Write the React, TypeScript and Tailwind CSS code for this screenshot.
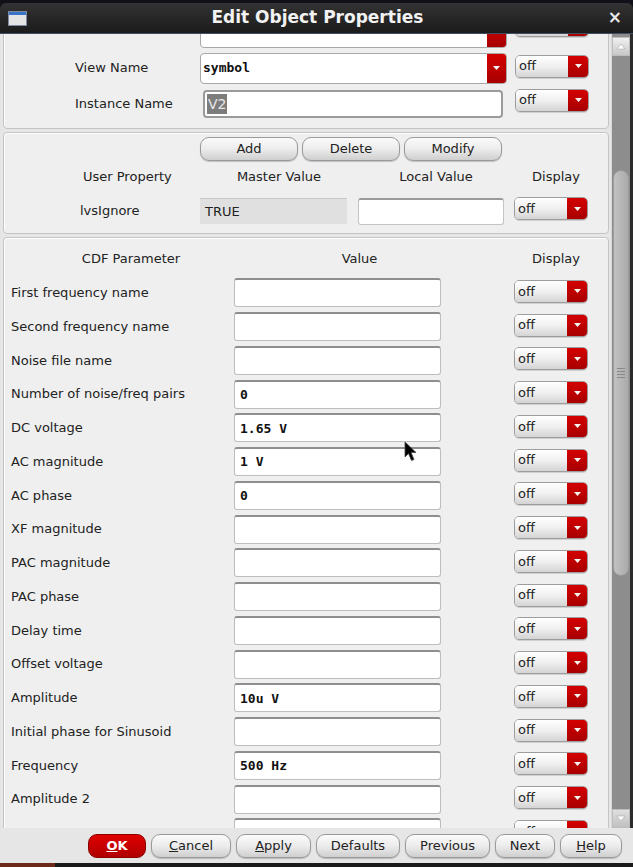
import React from "react";

/**
 * Edit Object Properties dialog (Virtuoso style).
 */

const SANS = { fontFamily: '"DejaVu Sans", Verdana, sans-serif' };
const MONO = { fontFamily: '"DejaVu Sans Mono", "Liberation Mono", monospace' };

interface CdfRow {
  label: string;
  value: string;
}

const CDF_ROWS: CdfRow[] = [
  { label: "First frequency name", value: "" },
  { label: "Second frequency name", value: "" },
  { label: "Noise file name", value: "" },
  { label: "Number of noise/freq pairs", value: "0" },
  { label: "DC voltage", value: "1.65 V" },
  { label: "AC magnitude", value: "1 V" },
  { label: "AC phase", value: "0" },
  { label: "XF magnitude", value: "" },
  { label: "PAC magnitude", value: "" },
  { label: "PAC phase", value: "" },
  { label: "Delay time", value: "" },
  { label: "Offset voltage", value: "" },
  { label: "Amplitude", value: "10u V" },
  { label: "Initial phase for Sinusoid", value: "" },
  { label: "Frequency", value: "500 Hz" },
  { label: "Amplitude 2", value: "" },
  { label: "", value: "" },
];

function DownTri() {
  return (
    <svg width="9" height="6" viewBox="0 0 9 6">
      <path d="M1 1 L8 1 L4.5 5 Z" fill="#f4f4f4" />
    </svg>
  );
}

function OffDrop({ label = "off" }: { label?: string }) {
  return (
    <div className="flex h-[23px] w-[74px] overflow-hidden rounded-[5px] border border-[#9d9d9d] shadow-[0_1px_0_#d0d0d0]">
      <div className="flex flex-1 items-center bg-gradient-to-b from-[#ffffff] via-[#f0f0f0] to-[#d4d4d4] pl-[3px] text-[13px] text-[#222]">
        {label}
      </div>
      <div className="flex w-[20px] items-center justify-center bg-gradient-to-b from-[#d40000] to-[#a80000]">
        <DownTri />
      </div>
    </div>
  );
}

function Field({ value, w = "w-[207px]", h = "h-[29px]" }: { value?: string; w?: string; h?: string }) {
  return (
    <div
      className={`${w} ${h} flex items-center rounded-[3px] border border-[#bdbdbd] border-t-2 border-t-[#8e8e8e] bg-white pl-[5px] text-[13px] font-bold text-[#111]`}
      style={MONO}
    >
      {value}
    </div>
  );
}

function GrayBtn({ children, w }: { children: React.ReactNode; w: string }) {
  return (
    <div
      className={`${w} flex h-[24px] items-center justify-center rounded-[9px] border border-[#9a9a9a] bg-gradient-to-b from-[#fbfbfb] via-[#ececec] to-[#cfcfcf] text-[13px] text-[#222] shadow-[0_1px_1px_rgba(0,0,0,0.2)]`}
    >
      {children}
    </div>
  );
}

function Cursor() {
  return (
    <svg className="absolute left-[404px] top-[407px]" width="14" height="22" viewBox="0 0 14 22">
      <path d="M1 1 L1 16 L4.5 12.5 L7.5 19.5 L10 18.5 L7 11.5 L12 11.5 Z" fill="#000" stroke="#444" strokeWidth="0.8" />
    </svg>
  );
}

export default function App() {
  return (
    <div className="relative flex h-[867px] w-[633px] flex-col overflow-hidden bg-[#101018]" style={SANS}>
      {/* Title bar */}
      <div className="mt-[3px] flex h-[31px] items-center rounded-t-[6px] border-b border-[#3c4f63] bg-gradient-to-b from-[#333] to-[#1b1b1b] px-[8px]">
        <div className="h-[15px] w-[19px] border border-[#7d8aa0] bg-[#e4e4e4]">
          <div className="h-[3px] bg-[#3a74c8]" />
        </div>
        <div className="flex-1 text-center text-[17px] font-bold text-[#f2f2f2]">Edit Object Properties</div>
        <div className="pr-[3px] text-[17px] font-bold text-[#e8e8e8]">×</div>
      </div>

      {/* Body */}
      <div className="flex h-[794px] bg-[#e6e6e6]">
        <div className="relative h-full w-[609px] overflow-hidden pl-[3px]">
          <div className="mt-[-21px] flex flex-col gap-[3px]">
            {/* Panel 1 */}
            <div className="rounded-[4px] border border-[#c4c4c4] bg-[#efefef] pb-[6px] shadow-[inset_1px_1px_0_#fff]">
              <div className="flex h-[36px] items-center">
                <div className="w-[196px]" />
                <div className="flex h-[31px] w-[307px] overflow-hidden rounded-[4px] border border-[#a8a8a8] bg-white">
                  <div className="flex-1" />
                  <div className="flex w-[19px] items-center justify-center bg-gradient-to-b from-[#d40000] to-[#a80000]">
                    <DownTri />
                  </div>
                </div>
                <div className="ml-[8px] mt-[-13px]">
                  <OffDrop label="" />
                </div>
              </div>
              <div className="flex h-[36px] items-center">
                <div className="w-[196px] pl-[71px] text-[13px] text-[#222]">View Name</div>
                <div className="flex h-[31px] w-[307px] overflow-hidden rounded-[4px] border border-[#a8a8a8] bg-white">
                  <div className="flex flex-1 items-center pl-[2px] text-[13px] font-bold text-[#111]" style={MONO}>
                    symbol
                  </div>
                  <div className="flex w-[19px] items-center justify-center bg-gradient-to-b from-[#d40000] to-[#a80000]">
                    <DownTri />
                  </div>
                </div>
                <div className="ml-[8px] mt-[-4px]">
                  <OffDrop />
                </div>
              </div>
              <div className="flex h-[36px] items-center">
                <div className="w-[196px] pl-[71px] text-[13px] text-[#222]">Instance Name</div>
                <div className="ml-[3px] flex h-[28px] w-[300px] items-center rounded-[4px] border-2 border-[#9a9a9a] bg-white pl-[2px]">
                  <span className="bg-[#7c7c7c] px-[1px] text-[14px] leading-[20px] text-[#e6e6e6]">V2</span>
                </div>
                <div className="ml-[12px] mt-[-8px]">
                  <OffDrop />
                </div>
              </div>
            </div>

            {/* Panel 2 */}
            <div className="rounded-[4px] border border-[#c4c4c4] bg-[#efefef] pb-[3px] pt-[4px] shadow-[inset_1px_1px_0_#fff]">
              <div className="ml-[196px] flex gap-[4px]">
                <GrayBtn w="w-[98px]">Add</GrayBtn>
                <GrayBtn w="w-[98px]">Delete</GrayBtn>
                <GrayBtn w="w-[98px]">Modify</GrayBtn>
              </div>
              <div className="flex h-[31px] items-center text-[13px] text-[#222]">
                <div className="w-[196px] pl-[79px]">User Property</div>
                <div className="w-[158px] text-center">Master Value</div>
                <div className="w-[156px] text-center">Local Value</div>
                <div className="w-[84px] text-center">Display</div>
              </div>
              <div className="flex h-[38px] items-center text-[13px] text-[#222]">
                <div className="w-[196px] pl-[76px]">lvsIgnore</div>
                <div className="w-[158px]">
                  <div className="flex h-[26px] w-[147px] items-center border-t border-[#c9c9c9] bg-[#e0e0e0] pl-[5px] text-[13px]">
                    TRUE
                  </div>
                </div>
                <div className="w-[156px]">
                  <div className="h-[27px] w-[146px] rounded-[3px] border border-[#c4c4c4] border-t-2 border-t-[#9a9a9a] bg-white" />
                </div>
                <div className="mt-[-5px]">
                  <OffDrop />
                </div>
              </div>
            </div>

            {/* Panel 3 */}
            <div className="rounded-[4px] border border-[#c4c4c4] bg-[#efefef] shadow-[inset_1px_1px_0_#fff]">
              <div className="flex h-[38px] items-center pt-[4px] text-[13px] text-[#222]">
                <div className="w-[230px] pl-[24px] text-center">CDF Parameter</div>
                <div className="w-[280px] pl-[44px] pr-[73px] text-center">Value</div>
                <div className="w-[84px] text-center">Display</div>
              </div>
              {CDF_ROWS.map((r, i) => (
                <div key={i} className="flex h-[33.75px] items-center">
                  <div className="w-[230px] pl-[7px] text-[13px] text-[#222]">{r.label}</div>
                  <Field value={r.value} />
                  <div className="ml-[73px] mt-[-3px]">
                    <OffDrop />
                  </div>
                </div>
              ))}
            </div>
          </div>
          <Cursor />
        </div>

        {/* Scrollbar */}
        <div className="ml-[2px] flex w-[19px] flex-col border-l border-[#d8d8d8] bg-[#8d8d8d] pt-[3px]">
          <div className="flex h-[19px] items-center justify-center border border-[#bdbdbd] bg-gradient-to-b from-[#f0f0f0] to-[#c8c8c8]">
            <svg width="10" height="7" viewBox="0 0 10 7">
              <path d="M1 6 L9 6 L5 1 Z" fill="#fff" stroke="#aaa" strokeWidth="0.6" />
            </svg>
          </div>
          <div className="relative flex-1">
            <div className="absolute left-[1px] right-[1px] top-[114px] flex h-[406px] items-center justify-center rounded-full border border-[#9c9c9c] bg-gradient-to-r from-[#c2c2c2] to-[#aaaaaa]">
              <div className="flex flex-col gap-[2px]">
                <div className="h-px w-[8px] bg-[#888]" />
                <div className="h-px w-[8px] bg-[#888]" />
                <div className="h-px w-[8px] bg-[#888]" />
                <div className="h-px w-[8px] bg-[#888]" />
              </div>
            </div>
          </div>
          <div className="flex h-[19px] items-center justify-center border border-[#bdbdbd] bg-gradient-to-b from-[#e0e0e0] to-[#c0c0c0]">
            <svg width="10" height="7" viewBox="0 0 10 7">
              <path d="M1 1 L9 1 L5 6 Z" fill="#fff" stroke="#aaa" strokeWidth="0.6" />
            </svg>
          </div>
        </div>
        <div className="w-[3px] bg-[#2c2c2c]" />
      </div>

      {/* Footer buttons */}
      <div className="flex h-[35px] items-center justify-end gap-[5px] bg-[#e6e6e6] pr-[11px]">
        <div className="flex h-[24px] w-[58px] items-center justify-center rounded-[9px] border border-[#8a0000] bg-gradient-to-b from-[#e00000] to-[#b00000] text-[13px] font-bold text-white">
          <span className="underline">O</span>K
        </div>
        <GrayBtn w="w-[80px]">
          <span className="underline">C</span>ancel
        </GrayBtn>
        <GrayBtn w="w-[75px]">
          <span className="underline">A</span>pply
        </GrayBtn>
        <GrayBtn w="w-[84px]">Defaults</GrayBtn>
        <GrayBtn w="w-[85px]">Previous</GrayBtn>
        <GrayBtn w="w-[60px]">Next</GrayBtn>
        <GrayBtn w="w-[62px]">
          <span className="underline">H</span>elp
        </GrayBtn>
      </div>
      <div className="flex h-[4px]">
        <div className="w-[55px] bg-[#6b2a1a]" />
        <div className="flex-1 bg-[#1a1a1a]" />
      </div>
    </div>
  );
}
